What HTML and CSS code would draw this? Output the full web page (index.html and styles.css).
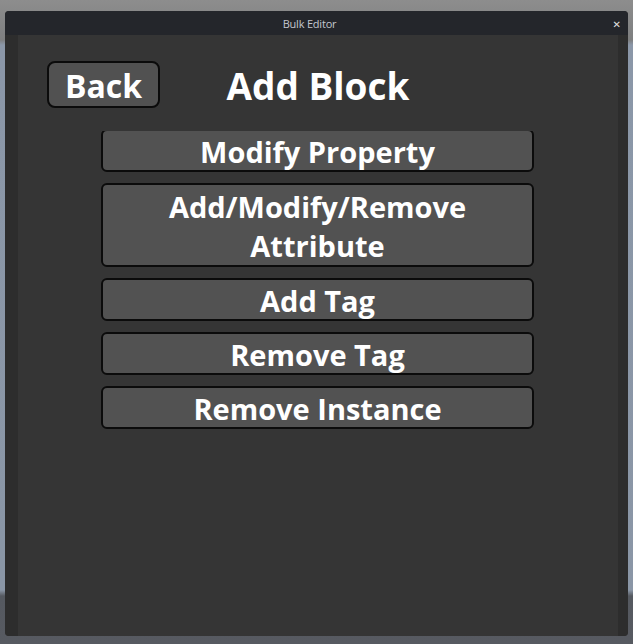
FILE: index.html
```html
<!DOCTYPE html>
<html>
<head>
<meta charset="utf-8">
<link rel="stylesheet" href="styles.css">
</head>
<body>
<div class="window">
  <div class="titlebar">
    <span class="title">Bulk Editor</span>
    <span class="close">&#x2715;</span>
  </div>
  <div class="body">
    <div class="strip left"></div>
    <div class="content">
      <div class="header">
        <button class="back">Back</button>
        <h1 class="heading">Add Block</h1>
      </div>
      <div class="scroll">
        <div class="list">
          <button class="item">Modify Property</button>
          <button class="item tall">Add/Modify/Remove<br>Attribute</button>
          <button class="item">Add Tag</button>
          <button class="item">Remove Tag</button>
          <button class="item">Remove Instance</button>
        </div>
      </div>
    </div>
    <div class="strip right"></div>
  </div>
</div>
</body>
</html>
```
FILE: styles.css
```css
* { box-sizing: border-box; }
html, body { margin: 0; height: 100%; }
body {
  background: linear-gradient(to bottom, #8d8d8d 0px, #7e7f80 40px, #8b97a8 45px, #8a96a6 590px, #555960 596px, #575a61 644px);
  padding: 11px 5px 8px 5px;
  font-family: "Open Sans", "Liberation Sans", sans-serif;
  overflow: hidden;
}
.window {
  height: 625px;
  background: #353535;
  border-radius: 4px;
  overflow: hidden;
  display: flex;
  flex-direction: column;
}
.titlebar {
  height: 24px;
  background: #24262b;
  position: relative;
  display: flex;
  align-items: center;
  justify-content: center;
  padding-right: 14px;
  flex: none;
}
.title {
  color: #c3c7cf;
  font-size: 11px;
  font-family: "Open Sans", "Liberation Sans", sans-serif;
  letter-spacing: -0.2px;
}
.close {
  position: absolute;
  right: 7px;
  top: 0;
  bottom: 0;
  display: flex;
  align-items: center;
  padding-top: 2px;
  color: #e0e0e0;
  font-size: 10px;
  font-family: "DejaVu Sans", sans-serif;
}
.body {
  flex: 1;
  display: flex;
}
.strip { background: #2d2d2d; flex: none; }
.strip.left { width: 13px; }
.strip.right { width: 10px; }
.content {
  flex: 1;
  display: flex;
  flex-direction: column;
}
.header {
  height: 96px;
  position: relative;
  display: flex;
  align-items: flex-start;
}
.back {
  margin: 26px 0 0 29px;
  width: 113px;
  height: 47px;
  background: #515151;
  border: 2px solid #0b0b0b;
  border-radius: 8px;
  color: #fff;
  font-family: "Open Sans", "Liberation Sans", sans-serif;
  font-weight: 700;
  font-size: 32px;
  padding: 2px 0 0 0;
  line-height: 1;
}
.heading {
  position: absolute;
  left: 0;
  right: 0;
  top: 26px;
  margin: 0;
  text-align: center;
  color: #fff;
  font-weight: 700;
  font-size: 37px;
  line-height: 50px;
  pointer-events: none;
}
.scroll {
  flex: 1;
  overflow: hidden;
}
.list {
  margin: -2px 0 0 83px;
  width: 433px;
  display: flex;
  flex-direction: column;
  gap: 11px;
}
.item {
  height: 43px;
  background: #525252;
  border: 2px solid #0b0b0b;
  border-radius: 6px;
  color: #fff;
  font-family: "Open Sans", "Liberation Sans", sans-serif;
  font-weight: 700;
  font-size: 29px;
  line-height: 39px;
  padding: 1px 0 0 0;
  text-align: center;
}
.item.tall { height: 84px; }
```
